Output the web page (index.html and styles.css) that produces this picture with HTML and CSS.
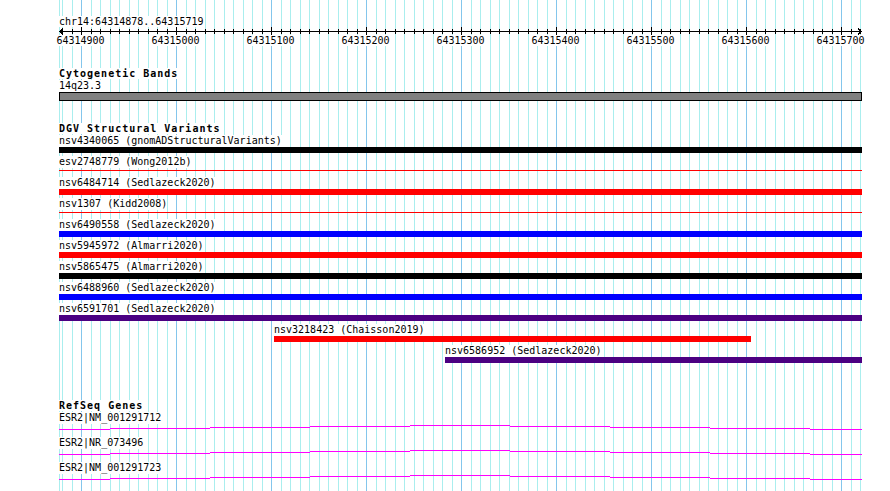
FILE: index.html
```html
<!DOCTYPE html>
<html lang="en">
<head>
  <meta charset="UTF-8" />
  <title>chr14:64314878..64315719</title>
  <link rel="stylesheet" href="styles.css">
</head>
<body>
  <div class="tracks">
    <div class="ruler">
      <div class="ruler-loc"><span>chr14:64314878..64315719</span></div>
      <svg class="ruler-axis" width="803" height="8" viewBox="0 0 803 8" shape-rendering="crispEdges">
        <defs>
          <pattern id="ticks" x="22" y="0" width="95" height="8" patternUnits="userSpaceOnUse">
            <path d="M0.5 0V8M10.5 2V7M19.5 2V7M29.5 2V7M38.5 2V7M48.5 2V7M57.5 2V7M67.5 2V7M76.5 2V7M86.5 2V7" stroke="#000" />
          </pattern>
        </defs>
        <rect x="0" y="0" width="803" height="8" fill="url(#ticks)" />
        <path d="M0 4.5H803" stroke="#000" />
        <path d="M4 1.5L1 4.5L4 7.5M799 1.5L802 4.5L799 7.5" fill="none" stroke="#000" />
      </svg>
      <div class="ruler-labels">
        <div class="tick"><span>64314900</span></div>
        <div class="tick"><span>64315000</span></div>
        <div class="tick"><span>64315100</span></div>
        <div class="tick"><span>64315200</span></div>
        <div class="tick"><span>64315300</span></div>
        <div class="tick"><span>64315400</span></div>
        <div class="tick"><span>64315500</span></div>
        <div class="tick"><span>64315600</span></div>
        <div class="tick"><span>64315700</span></div>
      </div>
    </div>

    <div class="track cyto">
      <h3 class="track-title"><span>Cytogenetic Bands</span></h3>
      <div class="label"><span>14q23.3</span></div>
      <div class="band"></div>
    </div>

    <div class="track dgv">
      <h3 class="track-title"><span>DGV Structural Variants</span></h3>
      <div class="feature">
        <div class="label"><span>nsv4340065 (gnomADStructuralVariants)</span></div>
        <div class="bar black"></div>
      </div>
      <div class="feature">
        <div class="label"><span>esv2748779 (Wong2012b)</span></div>
        <div class="bar-line"></div>
      </div>
      <div class="feature">
        <div class="label"><span>nsv6484714 (Sedlazeck2020)</span></div>
        <div class="bar red"></div>
      </div>
      <div class="feature">
        <div class="label"><span>nsv1307 (Kidd2008)</span></div>
        <div class="bar-line"></div>
      </div>
      <div class="feature">
        <div class="label"><span>nsv6490558 (Sedlazeck2020)</span></div>
        <div class="bar blue"></div>
      </div>
      <div class="feature">
        <div class="label"><span>nsv5945972 (Almarri2020)</span></div>
        <div class="bar red"></div>
      </div>
      <div class="feature">
        <div class="label"><span>nsv5865475 (Almarri2020)</span></div>
        <div class="bar black"></div>
      </div>
      <div class="feature">
        <div class="label"><span>nsv6488960 (Sedlazeck2020)</span></div>
        <div class="bar blue"></div>
      </div>
      <div class="feature">
        <div class="label"><span>nsv6591701 (Sedlazeck2020)</span></div>
        <div class="bar indigo"></div>
      </div>
      <div class="feature" style="margin-left:215px">
        <div class="label"><span>nsv3218423 (Chaisson2019)</span></div>
        <div class="bar red" style="width:477px"></div>
      </div>
      <div class="feature" style="margin-left:386px">
        <div class="label"><span>nsv6586952 (Sedlazeck2020)</span></div>
        <div class="bar indigo"></div>
      </div>
    </div>

    <div class="track refseq">
      <h3 class="track-title"><span>RefSeq Genes</span></h3>
      <div class="gene">
        <div class="label"><span>ESR2|NM_001291712</span></div>
        <svg class="gene-line" width="803" height="13" viewBox="0 0 803 13" shape-rendering="crispEdges">
          <path d="M0 5.5H51M51 4.5H151M151 3.5H251M251 2.5H351M351 1.5H451M451 2.5H551M551 3.5H651M651 4.5H751M751 5.5H803" stroke="#f0f" fill="none" />
        </svg>
      </div>
      <div class="gene">
        <div class="label"><span>ESR2|NR_073496</span></div>
        <svg class="gene-line" width="803" height="13" viewBox="0 0 803 13" shape-rendering="crispEdges">
          <path d="M0 5.5H51M51 4.5H151M151 3.5H251M251 2.5H351M351 1.5H451M451 2.5H551M551 3.5H651M651 4.5H751M751 5.5H803" stroke="#f0f" fill="none" />
        </svg>
      </div>
      <div class="gene">
        <div class="label"><span>ESR2|NM_001291723</span></div>
        <svg class="gene-line" width="803" height="13" viewBox="0 0 803 13" shape-rendering="crispEdges">
          <path d="M0 5.5H51M51 4.5H151M151 3.5H251M251 2.5H351M351 1.5H451M451 2.5H551M551 3.5H651M651 4.5H751M751 5.5H803" stroke="#f0f" fill="none" />
        </svg>
      </div>
    </div>
  </div>
</body>
</html>
```

FILE: styles.css
```css
body {
  margin: 0;
  background: #fff;
  color: #000;
  font-family: "DejaVu Sans Mono", "Liberation Mono", monospace;
  font-size: 10px;
}

/* grid: dark line every 100bp, light line every 10bp */
.tracks {
  margin-left: 59px;
  width: 803px;
  height: 491px;
  background:
    linear-gradient(#aaeeee, #aaeeee) 0 0 / 1px 100% no-repeat,
    linear-gradient(to right, #84c6ec 0 1px, transparent 1px) 22px 0 / 95px 100% repeat-x,
    linear-gradient(to right,
      transparent 10px, #aaeeee 10px 11px,
      transparent 11px 19px, #aaeeee 19px 20px,
      transparent 20px 29px, #aaeeee 29px 30px,
      transparent 30px 38px, #aaeeee 38px 39px,
      transparent 39px 48px, #aaeeee 48px 49px,
      transparent 49px 57px, #aaeeee 57px 58px,
      transparent 58px 67px, #aaeeee 67px 68px,
      transparent 68px 76px, #aaeeee 76px 77px,
      transparent 77px 86px, #aaeeee 86px 87px,
      transparent 87px) 22px 0 / 95px 100% repeat-x;
}

.ruler-loc {
  padding-top: 16px;
  line-height: 11px;
}

.ruler-loc span,
.tick span,
.label span,
.track-title span {
  background: #fff;
}

.ruler-axis {
  display: block;
}

.ruler-labels {
  display: flex;
  margin-left: -26px;
  line-height: 11px;
}

.tick {
  flex: 0 0 95px;
  text-align: center;
}

.track-title {
  margin: 0;
  font-size: 10px;
  font-weight: bold;
  letter-spacing: 1px;
  line-height: 12px;
}

.label {
  height: 12px;
  line-height: 12px;
  white-space: nowrap;
}

.label span {
  display: inline-block;
  height: 12px;
  vertical-align: top;
}

.cyto .track-title {
  margin-top: 22px;
}

.band {
  height: 7px;
  border: 1px solid #000;
  background: #808080;
}

.dgv .track-title {
  margin-top: 22px;
}

.feature {
  padding-bottom: 3px;
}

.bar {
  height: 6px;
}

.bar.black { background: #000; }
.bar.red { background: #f00; }
.bar.blue { background: #00f; }
.bar.indigo { background: #4b0082; }

.bar-line {
  height: 6px;
  background: linear-gradient(to bottom, transparent 2px, #f00 2px 3px, transparent 3px);
}

.refseq .track-title {
  margin-top: 34px;
}

.gene-line {
  display: block;
}
```
